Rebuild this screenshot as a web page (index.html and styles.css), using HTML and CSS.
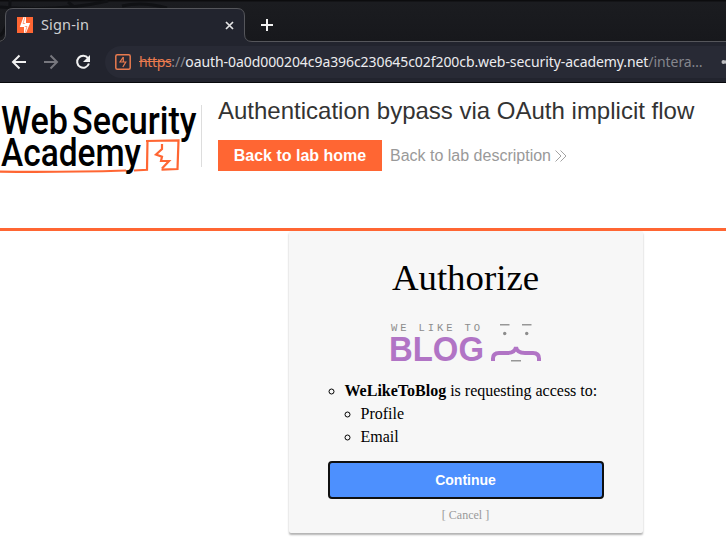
FILE: index.html
```html
<!DOCTYPE html>
<html lang="en">
<head>
<meta charset="utf-8">
<title>Sign-in</title>
<link rel="stylesheet" href="styles.css">
</head>
<body>
<header class="browser">
  <div class="tabstrip">
    <svg class="tab-shape" width="726" height="42" viewBox="0 0 726 42">
      <g fill="none" stroke="#101114" stroke-width="3"><path d="M0 7Q60 12 108 1M68 2l10 8M0 36Q10 26 10 0M122 6q20-5 45 2"/></g>
      <path d="M0 42Q5.500 41 5.500 35V16Q5.500 8.500 13 8.500H237Q244.500 8.500 244.500 16V34Q244.500 41.500 252 41.500V42Z" fill="#22242e"/>
      <path d="M0 41.300Q5.500 40 5.500 34V16Q5.500 8.500 13 8.500H237Q244.500 8.500 244.500 16V34Q244.500 41.500 252 41.500H726" fill="none" stroke="#55565b"/>
    </svg>
    <div class="tab">
      <svg class="favicon" width="16" height="16" viewBox="0 0 16 16"><path fill="#ff6633" d="M0 0h16v16H0z"/><path d="M6.500 0H9v6h4.200L9 16H7V10H2.800z" fill="#fff"/><path d="M8 0L6 6.500h2.200M8 16l2-6.500H7.800" stroke="#ff6633" stroke-width=".6" fill="none"/></svg>
      <span class="tab-title">Sign-in</span>
      <svg class="close" width="9" height="9" viewBox="0 0 9 9"><path d="M1 1l7 7M8 1L1 8" stroke="#e4e4e5" stroke-width="1.700"/></svg>
    </div>
    <svg class="plus" width="12" height="12" viewBox="0 0 12 12"><path d="M6 0v12M0 6h12" stroke="#f2f2f2" stroke-width="2"/></svg>
  </div>
  <div class="toolbar">
    <svg class="nav" width="100" height="40" viewBox="0 0 100 40" fill="none" stroke-width="2">
      <path d="M26 20H13M19.500 13.500L13 20l6.500 6.500" stroke="#f1f1f1"/>
      <path d="M44 20h13M50.500 13.500L57 20l-6.500 6.500" stroke="#77777e"/>
      <path d="M88 16.200A6 6 0 1 0 88.900 21.500" stroke="#f1f1f1"/><path d="M90 13v7h-7z" fill="#f1f1f1"/>
    </svg>
    <div class="address">
      <svg class="site-icon" width="16" height="16" viewBox="0 0 16 16" fill="none" stroke="#e97b4f"><rect x=".8" y=".8" width="14.400" height="14.400" rx="1.500" stroke-width="1.500"/><path d="M8.300 3L5 8h5.800L7.800 13M8.300 3v5" stroke-width="1.200"/></svg>
      <div class="url"><s>https</s><span class="dim">://</span><span class="host">oauth-0a0d000204c9a396c230645c02f200cb.web-security-academy.net</span><span class="dim">/intera…</span></div>
      <svg class="key" width="6" height="8" viewBox="0 0 6 8"><circle cx="2.500" cy="4" r="2" fill="#bcbcbf"/><circle cx="6" cy="4" r="2.200" fill="#bcbcbf"/></svg>
    </div>
  </div>
</header>
<section class="lab">
  <svg class="academy" width="201" height="74" viewBox="0 0 201 74">
    <g class="academy-text"><text x="1" y="28.900" textLength="67" lengthAdjust="spacingAndGlyphs">Web</text><text x="72" y="28.900" textLength="124.500" lengthAdjust="spacingAndGlyphs">Security</text><text x="1" y="61" textLength="140" lengthAdjust="spacingAndGlyphs">Academy</text></g>
    <g fill="none" stroke="#ff6633" stroke-width="2.200"><path d="M0 66.700Q60 67.500 126 65.500"/><path d="M134 65.500l13-.7L147.500 35"/><path d="M146 36l32.500-.7L177.500 64l-16 .7"/><path d="M162 39v5l-6 5.500 6 2.200-1 4.300h8l-7 7.500"/></g>
  </svg>
  <div class="divider"></div>
  <div class="lab-info">
    <h2>Authentication bypass via OAuth implicit flow</h2>
    <div class="links"><a class="home">Back to lab home</a><a class="description">Back to lab description</a><svg width="12" height="12" viewBox="0 0 12 12" fill="none" stroke="#999" stroke-width=".9"><path d="M.5.500L6 6 .5 11.500M5.500.500L11 6l-5.500 5.500"/></svg></div>
  </div>
</section>
<main class="card">
  <h1>Authorize</h1>
  <svg class="blog" width="152" height="42" viewBox="0 0 152 42">
    <text class="like" x="1" y="10.500" textLength="92" lengthAdjust="spacingAndGlyphs">WE LIKE TO</text>
    <text class="blog-word" x="-1" y="41" textLength="95" lengthAdjust="spacingAndGlyphs">BLOG</text>
    <path d="M110 4.800h9.500M132 4.800h9.500M121 40.700h10" stroke="#979797" stroke-width="1.500"/><g fill="#8c8c8c"><circle cx="114.700" cy="13.500" r="1.700"/><circle cx="136.700" cy="13.500" r="1.700"/></g>
    <path d="M103 41v-2.500q0-5.500 6-5.500h8q8 0 9-6 1 6 9 6h8q6 0 6 5.500V41" fill="none" stroke="#b174c5" stroke-width="4"/>
  </svg>
  <ul><li><strong>WeLikeToBlog</strong> is requesting access to:<ul><li>Profile</li><li>Email</li></ul></li></ul>
  <button>Continue</button>
  <a class="cancel">[ Cancel ]</a>
</main>
</body>
</html>
```
FILE: styles.css
```css
* { box-sizing: border-box; }
body { margin: 0; height: 554px; overflow: hidden; background: #fff; font-family: "Liberation Serif", serif; }
svg { display: block; flex: none; }
.browser { height: 83px; border-bottom: 1px solid #08090c; background: #22242e; font-family: "Noto Sans", sans-serif; }
.tabstrip { position: relative; display: flex; height: 42px; background: linear-gradient(#0c0c0e 1px, #1b1c20 2px, #17181c); }
.tab-shape { position: absolute; left: 0; top: 0; }
.tab { position: relative; display: flex; align-items: center; width: 245px; padding: 8px 11px 0 17px; }
.tab-title { margin: -2px 0 0 8px; color: #d0d0d2; font-size: 14.500px; letter-spacing: .15px; }
.close { margin-left: auto; }
.plus { position: relative; margin: 19px 0 0 16px; }
.toolbar { display: flex; height: 40px; }
.nav { width: 100px; }
.address { display: flex; flex: 1; align-items: center; height: 32px; margin: 4px 0 0 5px; padding-left: 10px; background: #282a35; border-radius: 16px 0 0 16px; }
.url { width: 564px; margin: -1px 0 0 8px; color: #ececef; font-size: 14px; letter-spacing: -.075px; white-space: nowrap; }
.url s { color: #e97b4f; letter-spacing: -.35px; }
.dim { color: #85868d; }
.key { margin-left: 18px; }
.lab { display: flex; height: 148px; padding-top: 22px; border-bottom: 3px solid #ff6633; font-family: "Liberation Sans", sans-serif; }
.academy { overflow: visible; }
.academy-text { font: 500 38px Roboto, sans-serif; }
.divider { width: 1px; height: 62px; background: #ddd; }
.lab-info { padding-left: 16px; }
h2 { margin: -9px 0 0; color: #333; font-size: 24px; font-weight: 400; line-height: 30px; white-space: nowrap; }
.links { display: flex; align-items: center; height: 31px; margin-top: 14px; font-size: 16px; }
.home { width: 164px; background: #ff6633; color: #fff; font-weight: 700; line-height: 31px; text-align: center; }
.description { margin: 0 4px 0 8px; color: #999; }
.card { width: 354px; height: 302px; margin: 0 0 0 289px; padding: 20px 40px 0; background: #f7f7f7; border-radius: 2px; box-shadow: 0 2px 2px rgba(0,0,0,.3); text-align: center; }
h1 { margin: 0 0 0 -1px; font-size: 36.800px; font-weight: 400; line-height: 54px; }
.blog { margin: 15px auto 0 61px; overflow: visible; }
.like { fill: #8c8c8c; font: 11px "Liberation Mono", monospace; letter-spacing: 3px; }
.blog-word { fill: #b174c5; font: bold 35px "Liberation Sans", sans-serif; }
ul { margin: 17px 0 0 -.5px; padding-left: 16px; list-style: circle; text-align: left; font-size: 16px; line-height: 23px; }
ul ul { margin: 0; }
button { display: block; width: 276px; height: 38px; margin: 13px 0 0 -1px; padding: 0 1px 0 0; border: 2px solid #101010; border-radius: 4px; background: #4d90fe; color: #fff; font: bold 14px "Liberation Sans", sans-serif; }
.cancel { display: block; margin: 9px 0 0 -1px; color: #999; font-size: 12px; line-height: 15px; }
```
